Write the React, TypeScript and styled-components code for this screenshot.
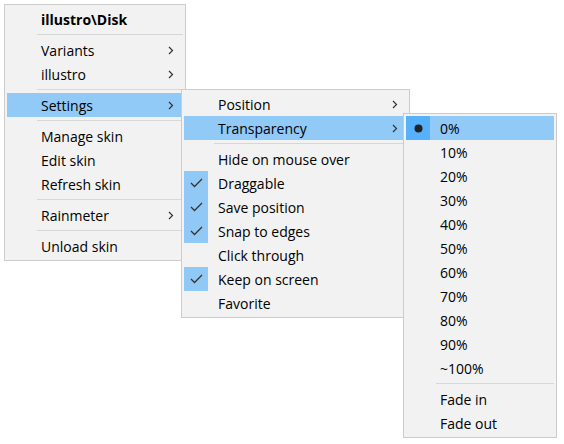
import React from "react";
import styled, { createGlobalStyle } from "styled-components";

const GlobalStyle = createGlobalStyle`
  html, body { margin: 0; padding: 0; background: #ffffff; }
  body { font-family: "Segoe UI", "Open Sans", "Noto Sans", sans-serif; }
`;

const Canvas = styled.div`
  position: relative;
  width: 564px;
  height: 444px;
  padding: 4px;
  box-sizing: border-box;
  overflow: hidden;
`;

const Menu = styled.div<{ $w: number; $x?: number; $y?: number }>`
  position: ${(p) => (p.$x !== undefined ? "absolute" : "relative")};
  left: ${(p) => (p.$x !== undefined ? `${p.$x}px` : "auto")};
  top: ${(p) => (p.$y !== undefined ? `${p.$y}px` : "auto")};
  width: ${(p) => p.$w}px;
  box-sizing: border-box;
  background: #f2f2f2;
  border: 1px solid #cccccc;
  padding: 2px;
  display: flex;
  flex-direction: column;
`;

const Row = styled.div<{ $active?: boolean }>`
  display: grid;
  grid-template-columns: 24px 1fr 15px;
  height: 24px;
  align-items: center;
  background: ${(p) => (p.$active ? "#91c9f7" : "transparent")};
  color: #000;
  font-size: 14px;
`;

const Mark = styled.div<{ $on?: boolean; $strong?: boolean }>`
  width: 24px;
  height: 24px;
  display: flex;
  align-items: center;
  justify-content: center;
  background: ${(p) => (p.$strong ? "#56b0fa" : p.$on ? "#90c8f6" : "transparent")};
`;

const Label = styled.span<{ $bold?: boolean }>`
  padding-left: 10px;
  padding-top: 2px;
  white-space: nowrap;
  font-weight: ${(p) => (p.$bold ? 700 : 400)};
  line-height: 22px;
`;

const Arrow = styled.div`
  display: flex;
  align-items: center;
  justify-content: flex-start;
  height: 24px;
`;

const Separator = styled.div`
  height: 7px;
  position: relative;
  &::after {
    content: "";
    position: absolute;
    left: 30px;
    right: 0;
    top: 3px;
    height: 1px;
    background: #d7d7d7;
  }
`;

const Chevron = () => (
  <svg width="6" height="9" viewBox="0 0 6 9">
    <path d="M1 1 L4.5 4.5 L1 8" fill="none" stroke="#333" strokeWidth="1.2" />
  </svg>
);

const Check = () => (
  <svg width="13" height="10" viewBox="0 0 13 10">
    <path d="M1 5 L4.5 8.5 L12 1" fill="none" stroke="#333" strokeWidth="1.3" />
  </svg>
);

const Bullet = () => (
  <svg width="9" height="9" viewBox="0 0 9 9">
    <circle cx="4.5" cy="4.5" r="4" fill="#222" />
  </svg>
);

type Item =
  | { sep: true }
  | {
      sep?: false;
      label: string;
      sub?: boolean;
      active?: boolean;
      checked?: boolean;
      bullet?: boolean;
      bold?: boolean;
    };

const MenuList = ({ items }: { items: Item[] }) => (
  <>
    {items.map((it, i) =>
      it.sep ? (
        <Separator key={i} />
      ) : (
        <Row key={i} $active={it.active}>
          <Mark $on={it.checked} $strong={it.bullet && it.active}>
            {it.checked && <Check />}
            {it.bullet && <Bullet />}
          </Mark>
          <Label $bold={it.bold}>{it.label}</Label>
          <Arrow>{it.sub && <Chevron />}</Arrow>
        </Row>
      )
    )}
  </>
);

const main: Item[] = [
  { label: "illustro\\Disk", bold: true },
  { sep: true },
  { label: "Variants", sub: true },
  { label: "illustro", sub: true },
  { sep: true },
  { label: "Settings", sub: true, active: true },
  { sep: true },
  { label: "Manage skin" },
  { label: "Edit skin" },
  { label: "Refresh skin" },
  { sep: true },
  { label: "Rainmeter", sub: true },
  { sep: true },
  { label: "Unload skin" },
];

const settings: Item[] = [
  { label: "Position", sub: true },
  { label: "Transparency", sub: true, active: true },
  { sep: true },
  { label: "Hide on mouse over" },
  { label: "Draggable", checked: true },
  { label: "Save position", checked: true },
  { label: "Snap to edges", checked: true },
  { label: "Click through" },
  { label: "Keep on screen", checked: true },
  { label: "Favorite" },
];

const transparency: Item[] = [
  { label: "0%", bullet: true, active: true },
  { label: "10%" },
  { label: "20%" },
  { label: "30%" },
  { label: "40%" },
  { label: "50%" },
  { label: "60%" },
  { label: "70%" },
  { label: "80%" },
  { label: "90%" },
  { label: "~100%" },
  { sep: true },
  { label: "Fade in" },
  { label: "Fade out" },
];

export default function App() {
  return (
    <>
      <GlobalStyle />
      <Canvas>
        <Menu $w={182}>
          <MenuList items={main} />
        </Menu>
        <Menu $w={229} $x={181} $y={89}>
          <MenuList items={settings} />
        </Menu>
        <Menu $w={154} $x={403} $y={113}>
          <MenuList items={transparency} />
        </Menu>
      </Canvas>
    </>
  );
}
